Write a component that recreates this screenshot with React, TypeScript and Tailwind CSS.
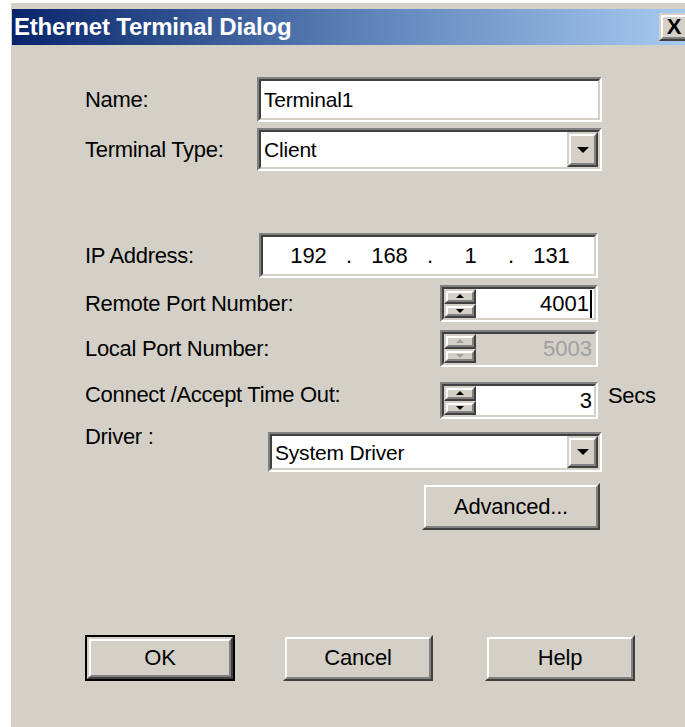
import React from "react";

type BoxProps = { className?: string; inner?: string; children?: React.ReactNode };

// Classic Windows sunken edge (edit boxes, combo boxes, spin fields)
function Sunken({ className = "", inner = "bg-white", children }: BoxProps) {
  return (
    <div className={`border-2 border-t-[#808080] border-l-[#808080] border-b-white border-r-white ${className}`}>
      <div className={`h-full w-full border-2 border-t-[#404040] border-l-[#404040] border-b-[#d4d0c8] border-r-[#d4d0c8] flex items-center ${inner}`}>
        {children}
      </div>
    </div>
  );
}

// Classic Windows raised edge (push buttons, drop buttons, spin arrows)
function Raised({ className = "", inner = "", children }: BoxProps) {
  return (
    <div className={`border-2 border-t-[#d4d0c8] border-l-[#d4d0c8] border-b-[#404040] border-r-[#404040] bg-[#d4d0c8] ${className}`}>
      <div className={`h-full w-full border-2 border-t-white border-l-white border-b-[#808080] border-r-[#808080] flex items-center justify-center ${inner}`}>
        {children}
      </div>
    </div>
  );
}

function Triangle({ up = false, size = "big", color = "#000" }: { up?: boolean; size?: "big" | "small"; color?: string }) {
  const w = size === "big" ? 12 : 8;
  const h = size === "big" ? 6 : 4;
  return (
    <svg width={w} height={h} viewBox={`0 0 ${w} ${h}`}>
      {up ? (
        <polygon points={`0,${h} ${w},${h} ${w / 2},0`} fill={color} />
      ) : (
        <polygon points={`0,0 ${w},0 ${w / 2},${h}`} fill={color} />
      )}
    </svg>
  );
}

function Combo({ value, className }: { value: string; className: string }) {
  return (
    <Sunken className={className}>
      <span className="flex-1 pl-[3px] text-[21px] leading-none tracking-[-0.2px] text-black">{value}</span>
      <Raised className="h-full w-[31px]">
        <Triangle />
      </Raised>
    </Sunken>
  );
}

function Spin({ value, disabled = false, caret = false }: { value: string; disabled?: boolean; caret?: boolean }) {
  const arrow = disabled ? "#a0a0a0" : "#000";
  return (
    <Sunken className="h-[37px] w-[158px]" inner={disabled ? "bg-[#d4d0c8]" : "bg-white"}>
      <div className="flex h-full w-[32px] flex-col">
        <Raised className="h-1/2 w-full">
          <Triangle up size="small" color={arrow} />
        </Raised>
        <Raised className="h-1/2 w-full">
          <Triangle size="small" color={arrow} />
        </Raised>
      </div>
      <div className="flex flex-1 items-center justify-end pr-[2px]">
        <span className={`text-[22px] leading-none ${disabled ? "text-[#a0a0a0]" : "text-black"}`}>{value}</span>
        {caret && <span className="ml-[1px] h-[28px] w-[2px] bg-black" />}
      </div>
    </Sunken>
  );
}

function Label({ children, className = "" }: { children: React.ReactNode; className?: string }) {
  return (
    <span className={`text-[22px] leading-[24px] tracking-[-0.3px] text-black whitespace-nowrap ${className}`}>
      {children}
    </span>
  );
}

function Button({ label, primary = false, className = "" }: { label: string; primary?: boolean; className?: string }) {
  const face = (
    <Raised className="h-full w-full">
      <span className="text-[22px] leading-none tracking-[-0.2px] text-black">{label}</span>
    </Raised>
  );
  if (primary) {
    return <div className={`border-2 border-black ${className}`}>{face}</div>;
  }
  return <div className={className}>{face}</div>;
}

export default function App() {
  const octets = ["192", "168", "1", "131"];
  return (
    <div className="h-[727px] w-[685px] overflow-hidden bg-white pl-[11px] pt-[3px] font-['Liberation_Sans',Arial,sans-serif]">
      <div className="flex h-full flex-col border-l border-t-[6px] border-l-[#d4d0c8] border-t-[#d4d0c8] bg-[#d4d0c8]">
        {/* caption bar */}
        <div className="flex h-[36px] shrink-0 items-center justify-between bg-linear-to-r from-[#0a246a] via-[#5a7fb5] to-[#a6caf0] pl-[2px]">
          <span className="text-[24px] font-bold leading-none tracking-[-0.2px] text-white">Ethernet Terminal Dialog</span>
          <Raised className="mt-[4px] h-[28px] w-[26px] self-start border-r-0" inner="border-r-0">
            <span className="text-[22px] font-bold leading-none text-black">X</span>
          </Raised>
        </div>

        {/* form */}
        <div className="flex flex-col pl-[73px]">
          <div className="mt-[32px] flex h-[45px] items-center">
            <Label className="w-[172px]">Name:</Label>
            <Sunken className="h-[45px] w-[345px]">
              <span className="pl-[3px] text-[21px] leading-none tracking-[-0.2px] text-black">Terminal1</span>
            </Sunken>
          </div>

          <div className="mt-[6px] flex h-[43px] items-center">
            <Label className="w-[172px]">Terminal Type:</Label>
            <Combo value="Client" className="h-[43px] w-[345px]" />
          </div>

          <div className="mt-[62px] flex h-[45px] items-center">
            <Label className="w-[174px]">IP Address:</Label>
            <Sunken className="h-[45px] w-[339px]">
              <div className="flex items-center pl-[14px] text-[22px] leading-none text-black">
                {octets.map((o, i) => (
                  <React.Fragment key={i}>
                    {i > 0 && <span className="w-[18px] text-center">.</span>}
                    <span className="w-[63px] text-center">{o}</span>
                  </React.Fragment>
                ))}
              </div>
            </Sunken>
          </div>

          <div className="mt-[7px] flex h-[37px] w-[513px] items-center justify-between">
            <Label>Remote Port Number:</Label>
            <Spin value="4001" caret />
          </div>

          <div className="mt-[8px] flex h-[37px] w-[513px] items-center justify-between">
            <Label>Local Port Number:</Label>
            <Spin value="5003" disabled />
          </div>

          <div className="mt-[15px] flex h-[37px] items-center">
            <div className="flex w-[513px] items-center justify-between">
              <Label className="mb-[12px]">Connect /Accept Time Out:</Label>
              <Spin value="3" />
            </div>
            <Label className="mb-[10px] ml-[10px]">Secs</Label>
          </div>

          <div className="mt-[13px] flex h-[40px] items-center">
            <Label className="mb-[30px] w-[183px]">Driver :</Label>
            <Combo value="System Driver" className="h-[40px] w-[334px]" />
          </div>

          <div className="mt-[11px] flex h-[47px]">
            <Button label="Advanced..." className="ml-[337px] h-[47px] w-[178px]" />
          </div>

          <div className="mt-[105px] flex h-[46px] items-center">
            <Button label="OK" primary className="h-[46px] w-[150px]" />
            <Button label="Cancel" className="ml-[48px] h-[46px] w-[150px]" />
            <Button label="Help" className="ml-[52px] h-[46px] w-[150px]" />
          </div>
        </div>
      </div>
    </div>
  );
}
